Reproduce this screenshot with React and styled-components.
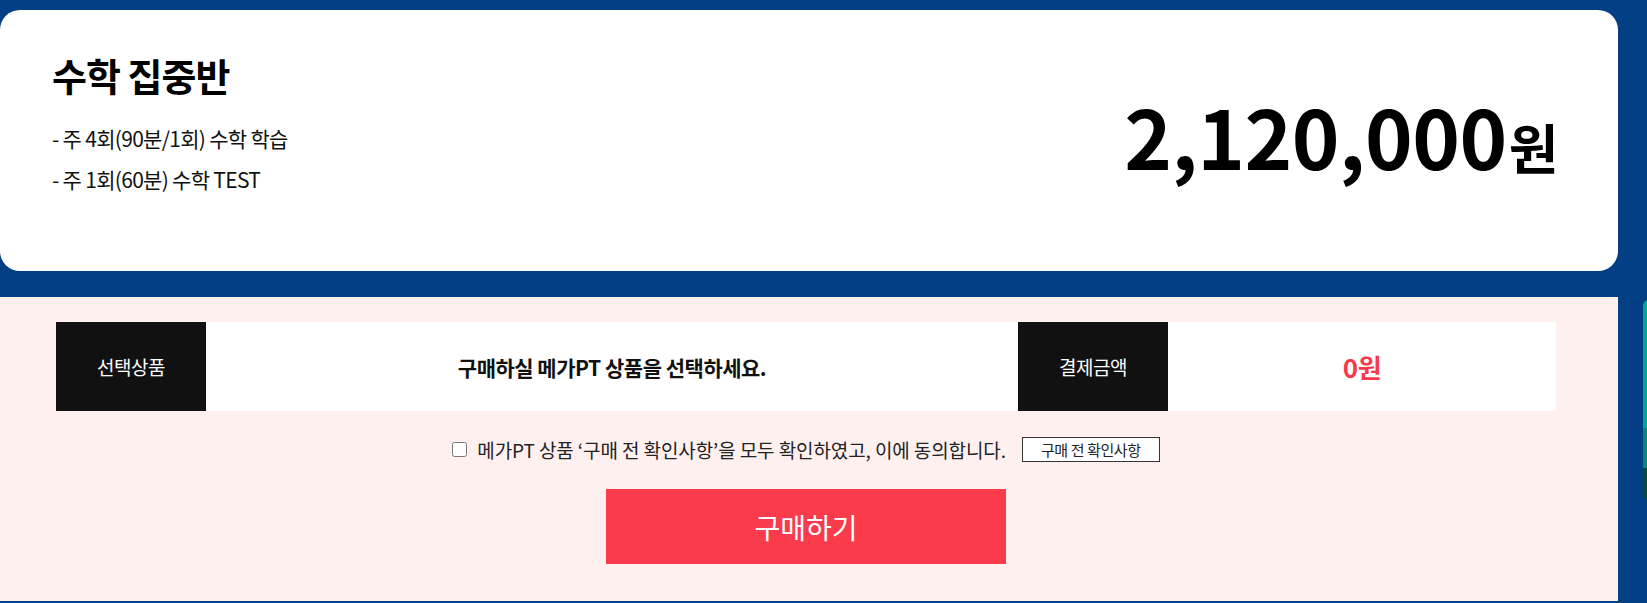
import styled, { createGlobalStyle } from "styled-components";

const Global = createGlobalStyle`
  html, body {
    margin: 0;
    padding: 0;
    background: #023f85;
    font-family: "Noto Sans CJK KR", "Noto Sans", sans-serif;
    overflow: hidden;
  }
`;

const Page = styled.div`
  position: relative;
  width: 1647px;
  height: 603px;
  padding-top: 10px;
  box-sizing: border-box;
`;

const Column = styled.div`
  width: 1618px;
  display: flex;
  flex-direction: column;
  gap: 26px;
`;

const Card = styled.div`
  height: 261px;
  background: #fff;
  border-radius: 20px;
  display: flex;
  justify-content: space-between;
  align-items: center;
  padding: 0 60px 0 52px;
  box-sizing: border-box;
`;

const Info = styled.div`
  display: flex;
  flex-direction: column;
  margin-top: -34px;
`;

const Title = styled.h2`
  margin: 0 0 16px;
  font-size: 38px;
  font-weight: 700;
  color: #000;
  letter-spacing: -1px;
`;

const Line = styled.p`
  margin: 0;
  font-size: 21px;
  line-height: 41px;
  color: #111;
  letter-spacing: -0.7px;
`;

const Price = styled.div`
  margin-bottom: 12px;
  font-size: 81px;
  font-weight: 700;
  color: #000;
  letter-spacing: -0.5px;
  line-height: 1;
`;

const Unit = styled.span`
  font-size: 54px;
  font-weight: 700;
  margin-left: 2px;
`;

const Order = styled.div`
  background: #fff0f0;
  height: 304px;
  padding: 25px 62px 0 56px;
  box-sizing: border-box;
  display: flex;
  flex-direction: column;
  align-items: center;
`;

const Table = styled.div`
  width: 1500px;
  height: 89px;
  display: grid;
  grid-template-columns: 150px 1fr 150px 388px;
  background: #fff;
`;

const Label = styled.div`
  background: #111;
  color: #fff;
  font-size: 19px;
  letter-spacing: -0.5px;
  display: flex;
  align-items: center;
  justify-content: center;
`;

const Value = styled.div`
  display: flex;
  align-items: center;
  justify-content: center;
  font-size: ${(p) => (p.price ? "26px" : "21px")};
  font-weight: 700;
  color: ${(p) => (p.price ? "#f73a4b" : "#111")};
  letter-spacing: -0.5px;
`;

const Agree = styled.label`
  margin-top: 25px;
  display: flex;
  align-items: center;
  font-size: 19px;
  color: #222;
  letter-spacing: -0.1px;
`;

const Check = styled.input`
  width: 15px;
  height: 15px;
  margin: 0 10px 0 0;
`;

const Notice = styled.button`
  margin-left: 16px;
  height: 25px;
  padding: 0 18px;
  border: 1px solid #333;
  background: #fff;
  font-family: inherit;
  font-size: 15px;
  color: #222;
  letter-spacing: -0.4px;
  line-height: 1;
`;

const Buy = styled.button`
  margin-top: 26px;
  width: 400px;
  height: 75px;
  border: 0;
  background: #f93b4c;
  color: #fff;
  font-family: inherit;
  font-size: 28px;
  font-weight: 400;
`;

const SideTab = styled.div`
  position: absolute;
  left: 1643px;
  top: 300px;
  width: 12px;
  height: 200px;
  border-radius: 6px 0 0 6px;
  background: linear-gradient(#00a897 0 64%, #0b8878 64% 84%, #0b4a3c 84%);
`;

export default function App() {
  return (
    <Page>
      <Global />
      <Column>
        <Card>
          <Info>
            <Title>수학 집중반</Title>
            <Line>- 주 4회(90분/1회) 수학 학습</Line>
            <Line>- 주 1회(60분) 수학 TEST</Line>
          </Info>
          <Price>
            2,120,000<Unit>원</Unit>
          </Price>
        </Card>
        <Order>
          <Table>
            <Label>선택상품</Label>
            <Value>구매하실 메가PT 상품을 선택하세요.</Value>
            <Label>결제금액</Label>
            <Value price>0원</Value>
          </Table>
          <Agree>
            <Check type="checkbox" />
            메가PT 상품 ‘구매 전 확인사항’을 모두 확인하였고, 이에 동의합니다.
            <Notice type="button">구매 전 확인사항</Notice>
          </Agree>
          <Buy type="button">구매하기</Buy>
        </Order>
      </Column>
      <SideTab />
    </Page>
  );
}
